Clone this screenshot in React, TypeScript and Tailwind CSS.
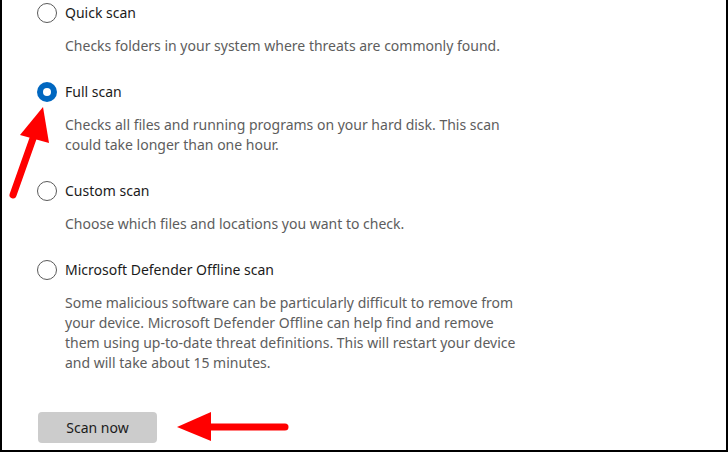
import React from "react";

const font = { fontFamily: '"Noto Sans", "Open Sans", Arial, sans-serif' };

function Radio({ checked }: { checked?: boolean }) {
  if (checked) {
    return (
      <span className="w-5 h-5 rounded-full bg-[#0067c0] flex items-center justify-center shrink-0">
        <span className="w-2 h-2 rounded-full bg-white" />
      </span>
    );
  }
  return <span className="w-5 h-5 rounded-full border border-[#5a5a5a] bg-white shrink-0" />;
}

function Option({ label, lines, checked }: { label: string; lines: string[]; checked?: boolean }) {
  return (
    <div className="flex flex-col pb-[26px]">
      <div className="flex items-center gap-2 h-5">
        <Radio checked={checked} />
        <span className="text-[14px] text-[#1b1b1b] leading-5 whitespace-nowrap">{label}</span>
      </div>
      <div className="pl-7 mt-[13px] text-[14px] leading-5 text-[#5d5d5d] whitespace-nowrap">
        {lines.map((l, i) => (
          <div key={i}>{l}</div>
        ))}
      </div>
    </div>
  );
}

export default function App() {
  return (
    <div
      className="relative w-[728px] h-[452px] bg-white border-l-2 border-r-2 border-b-2 border-black overflow-hidden"
      style={font}
    >
      <div className="flex flex-col pl-[35px] pt-[3px]">
        <Option label="Quick scan" lines={["Checks folders in your system where threats are commonly found."]} />
        <Option
          label="Full scan"
          checked
          lines={[
            "Checks all files and running programs on your hard disk. This scan",
            "could take longer than one hour.",
          ]}
        />
        <Option label="Custom scan" lines={["Choose which files and locations you want to check."]} />
        <Option
          label="Microsoft Defender Offline scan"
          lines={[
            "Some malicious software can be particularly difficult to remove from",
            "your device. Microsoft Defender Offline can help find and remove",
            "them using up-to-date threat definitions. This will restart your device",
            "and will take about 15 minutes.",
          ]}
        />
        <div className="mt-[13px]">
          <button className="w-[119px] h-[31px] rounded-[4px] bg-[#cccccc] text-[14px] text-[#1b1b1b] flex items-center justify-center ml-px">
            Scan now
          </button>
        </div>
      </div>

      <svg className="absolute left-0 top-0 pointer-events-none" width="728" height="452" viewBox="0 0 728 452">
        <line x1="11" y1="195" x2="34" y2="130" stroke="#ff0000" strokeWidth="7" strokeLinecap="round" />
        <polygon points="41,107 18,135 47,143" fill="#ff0000" />
        <line x1="205" y1="427" x2="283" y2="427" stroke="#ff0000" strokeWidth="7" strokeLinecap="round" />
        <polygon points="175,427 209,412 209,441" fill="#ff0000" />
      </svg>
    </div>
  );
}
